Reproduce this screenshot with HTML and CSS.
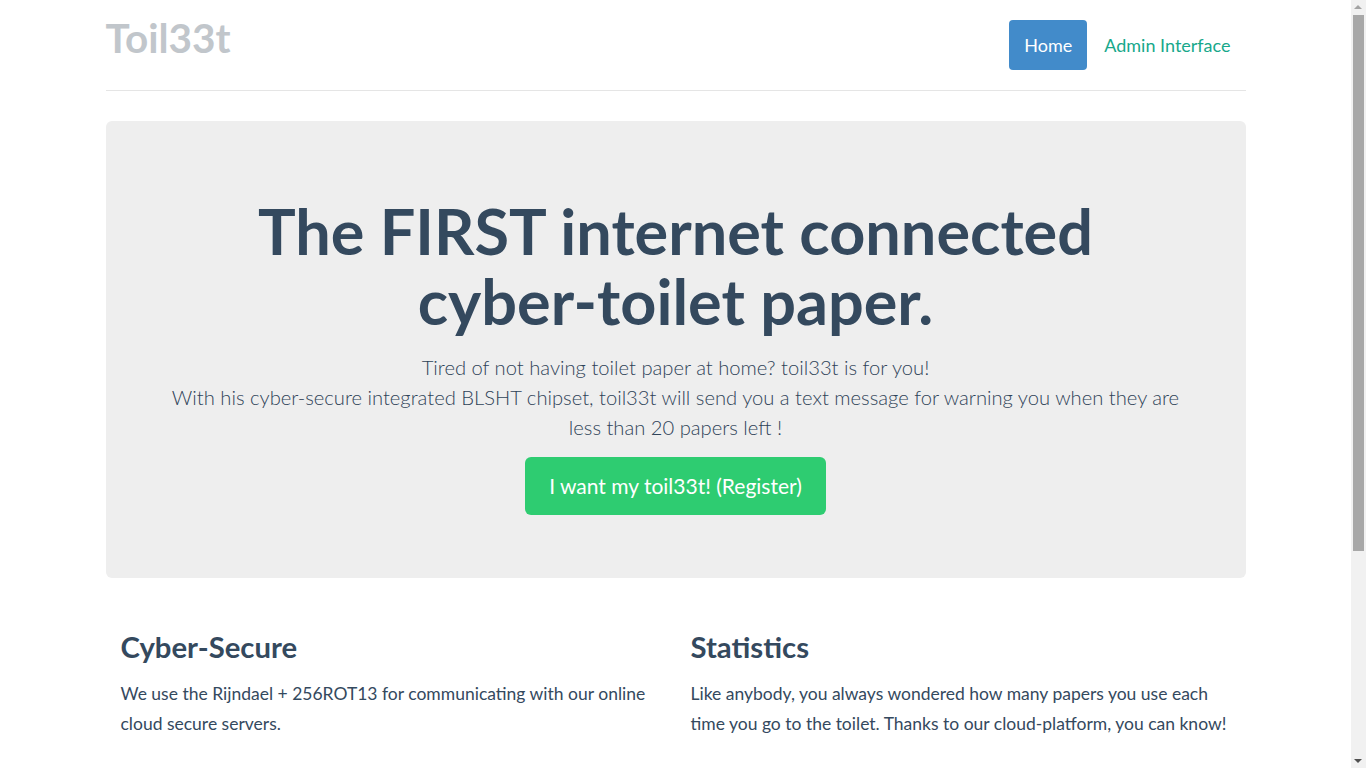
FILE: index.html
```html
<!DOCTYPE html>
<html lang="en">
<head>
<meta charset="utf-8">
<title>Toil33t</title>
<link rel="stylesheet" href="styles.css">
</head>
<body>
<div class="page">
  <div class="container">
    <header class="header">
      <h3 class="brand">Toil33t</h3>
      <nav>
        <ul class="pills">
          <li><a class="pill active" href="#">Home</a></li>
          <li><a class="pill" href="#">Admin Interface</a></li>
        </ul>
      </nav>
    </header>

    <section class="jumbotron">
      <h1>The FIRST internet connected cyber-toilet paper.</h1>
      <p class="lead">Tired of not having toilet paper at home? toil33t is for you!<br>With his cyber-secure integrated BLSHT chipset, toil33t will send you a text message for warning you when they are less than 20 papers left !</p>
      <p class="cta-wrap"><a class="btn-register" href="#">I want my toil33t! (Register)</a></p>
    </section>

    <section class="marketing">
      <div class="col">
        <h4>Cyber-Secure</h4>
        <p>We use the Rijndael + 256ROT13 for communicating with our online cloud secure servers.</p>
      </div>
      <div class="col">
        <h4>Statistics</h4>
        <p>Like anybody, you always wondered how many papers you use each time you go to the toilet. Thanks to our cloud-platform, you can know!</p>
      </div>
    </section>
  </div>
</div>
<div class="scrollbar" aria-hidden="true">
  <span class="arrow up"></span>
  <span class="thumb"></span>
  <span class="arrow down"></span>
</div>
</body>
</html>
```

FILE: styles.css
```css
* { box-sizing: border-box; }

html, body {
  margin: 0;
  padding: 0;
}

body {
  font-family: Lato, "Open Sans", "Liberation Sans", sans-serif;
  color: #34495e;
  background: #ffffff;
  font-size: 17.5px;
  line-height: 30px;
  overflow: hidden;
}

.page {
  margin-right: 15px;
}

.container {
  width: 1170px;
  margin: 0 auto;
  padding: 0 15px;
}

.header {
  display: flex;
  justify-content: space-between;
  align-items: flex-start;
  padding-top: 20px;
  padding-bottom: 20px;
  border-bottom: 1px solid #e5e5e5;
}

.brand {
  margin: 0;
  font-size: 40.5px;
  line-height: 36px;
  font-weight: 700;
  color: #c1c6cb;
}

.pills {
  list-style: none;
  margin: 0;
  padding: 0;
  display: flex;
  gap: 2px;
}

.pill {
  display: block;
  padding: 14px 15px;
  font-size: 18px;
  line-height: 22px;
  color: #17a88b;
  text-decoration: none;
  border-radius: 4px;
}

.pill.active {
  background: #428bca;
  color: #ffffff;
}

.jumbotron {
  margin-top: 30px;
  background: #eeeeee;
  border-radius: 6px;
  padding: 75px 60px 48px;
  text-align: center;
}

.jumbotron h1 {
  margin: 0;
  font-size: 63px;
  line-height: 70px;
  font-weight: 700;
  color: #34495e;
}

.lead {
  margin: 16px 0 15px;
  font-size: 20.2px;
  line-height: 30px;
  font-weight: 300;
  color: #2f4358;
}

.cta-wrap {
  margin: 0 0 15px;
}

.btn-register {
  display: inline-block;
  padding: 16px 24px;
  font-size: 21px;
  line-height: 26px;
  color: #ffffff;
  background: #2ecc71;
  border-radius: 6px;
  text-decoration: none;
}

.marketing {
  display: grid;
  grid-template-columns: 1fr 1fr;
  margin: 53px 0 0;
}

.col {
  padding: 0 15px;
}

.marketing h4 {
  margin: 0;
  font-size: 29.3px;
  line-height: 32px;
  font-weight: 700;
}

.marketing p {
  margin: 16px 0 0;
}

/* browser scrollbar as shown in the reference */
.scrollbar {
  position: fixed;
  top: 0;
  right: 0;
  width: 15px;
  height: 100vh;
  background: #f1f1f1;
}

.thumb {
  position: absolute;
  top: 15px;
  left: 2px;
  width: 11px;
  height: 536px;
  background: #a8a8a8;
}

.arrow {
  position: absolute;
  left: 3px;
  width: 0;
  height: 0;
  border-left: 4.5px solid transparent;
  border-right: 4.5px solid transparent;
}

.arrow.up {
  top: 5px;
  border-bottom: 4px solid #a3a3a3;
}

.arrow.down {
  bottom: 5px;
  border-top: 4px solid #505050;
}
```
